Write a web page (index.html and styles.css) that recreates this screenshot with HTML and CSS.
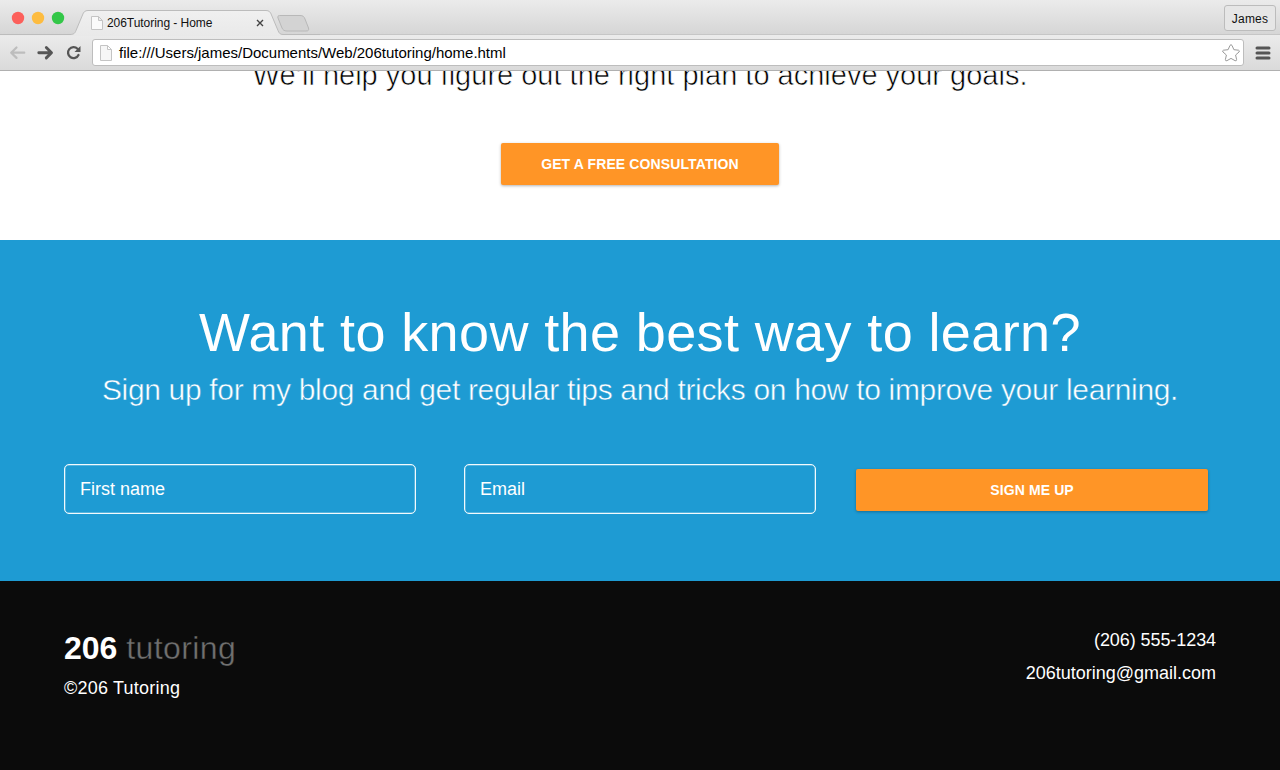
FILE: index.html
```html
<!DOCTYPE html>
<html lang="en">
<head>
<meta charset="utf-8">
<title>206Tutoring - Home</title>
<link rel="stylesheet" href="styles.css">
</head>
<body>
<div class="browser">
  <header class="chrome">
    <div class="titlebar">
      <svg class="strip" width="320" height="36" viewBox="0 0 320 36">
        <defs>
          <linearGradient id="tab" x1="0" y1="0" x2="0" y2="1"><stop offset="0" stop-color="#f0f0f0"/><stop offset="1" stop-color="#e9e9e9"/></linearGradient>
        </defs>
        <path d="M0 34.500H70C74 34.500 75 33 76 30.500L82.500 15C83.500 12 85 10.500 88 10.500H266C269 10.500 270.500 12 271.500 15L278 30.500C279 33 280 34.500 283 34.500H320V36H0Z" fill="url(#tab)"/>
        <path d="M0 34.500H70C74 34.500 75 33 76 30.500L82.500 15C83.500 12 85 10.500 88 10.500H266C269 10.500 270.500 12 271.500 15L278 30.500C279 33 280 34.500 283 34.500H320" fill="none" stroke="#bcbcbc"/>
        <path d="M279.500 15.500H300C303 15.500 304 16.500 305 19L308.500 28C309 30 308.500 31 306 31H287C284 31 283 30 282 28L278 18C277.500 16.500 278 15.500 279.500 15.500Z" fill="#d3d3d3" stroke="#b8b8b8"/>
        <circle cx="18" cy="18" r="6.200" fill="#fc605b"/>
        <circle cx="38" cy="18" r="6.200" fill="#fdbc40"/>
        <circle cx="58" cy="18" r="6.200" fill="#33c748"/>
        <path d="M91.500 16.500H98.500L102.500 20.500V29.500H91.500ZM98.500 16.500V20.500H102.500" fill="#fafafa" stroke="#c4c4c4"/>
        <path d="M257 20L263 26M263 20L257 26" stroke="#444" stroke-width="1.400"/>
      </svg>
      <span class="tab-title">206Tutoring - Home</span>
      <span class="profile">James</span>
    </div>
    <div class="toolbar">
      <svg class="nav" width="92" height="35" viewBox="0 36 92 35" fill="none" stroke-linecap="round" stroke-linejoin="round">
        <path d="M24.300 52.700H11.500M16.500 47.500L11.200 52.700L16.500 57.900" stroke="#bdbdbd" stroke-width="2.200"/>
        <path d="M38.800 52.700H51M46.300 47.500L51.500 52.700L46.300 57.900" stroke="#555" stroke-width="2.900"/>
        <path d="M77.500 48.800A5.500 5.500 0 1 0 78.500 55" stroke="#555" stroke-width="2.300"/>
        <path d="M80.500 46V52H74.500Z" fill="#555"/>
      </svg>
      <div class="address">
        <svg width="12" height="16" viewBox="0 0 12 16"><path d="M.5 .5H7.500L11.500 4.500V15.500H.5ZM7.500 .5V4.500H11.500" fill="#f6f6f6" stroke="#c4c4c4"/></svg>
        <span class="url">file:///Users/james/Documents/Web/206tutoring/home.html</span>
        <svg class="star" width="20" height="20" viewBox="0 0 20 20"><path d="M9 2.400Q10 .9 11 2.400L12.900 6.700L17.500 7.200Q19.100 7.700 18 9L14.600 12L15.600 16.600Q15.600 18.200 14.100 17.700L10 15.400L5.900 17.700Q4.400 18.200 4.400 16.600L5.400 12L2 9Q.9 7.700 2.500 7.200L7.100 6.700Z" fill="#fff" stroke="#999" stroke-linejoin="round"/></svg>
      </div>
      <svg class="menu" width="16" height="14" viewBox="0 0 16 14"><path d="M2 2H14M2 7H14M2 12H14" stroke="#555" stroke-width="3" stroke-linecap="round"/></svg>
    </div>
  </header>
  <main class="page">
    <section class="plan">
      <p class="plan-text">We’ll help you figure out the right plan to achieve your goals.</p>
      <a class="btn consult">GET A FREE CONSULTATION</a>
    </section>
    <section class="signup">
      <h1>Want to know the best way to learn?</h1>
      <p class="lead">Sign up for my blog and get regular tips and tricks on how to improve your learning.</p>
      <div class="form">
        <div class="field">First name</div>
        <div class="field">Email</div>
        <a class="btn join">SIGN ME UP</a>
      </div>
    </section>
    <footer class="footer">
      <div>
        <div class="logo"><b>206</b> <span>tutoring</span></div>
        <div class="copy">©206 Tutoring</div>
      </div>
      <div class="contact">
        <div class="phone">(206) 555-1234</div>
        <div>206tutoring@gmail.com</div>
      </div>
    </footer>
  </main>
</div>
</body>
</html>
```
FILE: styles.css
```css
* { box-sizing: border-box; margin: 0; padding: 0; }
body { font-family: "Liberation Sans", Arial, sans-serif; background: #fff; overflow: hidden; }
.browser { width: 1280px; height: 770px; display: flex; flex-direction: column; overflow: hidden; }
.chrome { height: 71px; flex: none; border-bottom: 1px solid #b0b0b0; }
.titlebar { height: 36px; display: flex; align-items: flex-start; background: linear-gradient(#ebebeb, #d6d6d6 34px, #c6c6c6 34px, #c6c6c6 35px, #ebebeb 35px); }
.strip { flex: none; margin-right: -213px; }
.tab-title { position: relative; margin-top: 16px; font-size: 12px; line-height: 14px; letter-spacing: -.05px; color: #111; white-space: nowrap; }
.profile { margin: 5px 4px 0 auto; width: 52px; height: 26px; border: 1px solid #bcbcbc; border-radius: 3px; background: #e6e6e6; font-size: 12px; letter-spacing: .2px; line-height: 26px; text-align: center; color: #111; }
.toolbar { height: 34px; display: flex; align-items: flex-start; background: linear-gradient(#ebebeb, #dadada); }
.nav { flex: none; }
.address { width: 1152px; height: 27px; margin-top: 3px; padding: 0 2px 0 7px; display: flex; align-items: center; border: 1px solid #bdbdbd; border-radius: 3px; background: #fff; }
.url { margin-left: 7px; font-size: 15px; line-height: 18px; letter-spacing: -.01px; color: #000; }
.star { margin-left: auto; }
.menu { margin: 10px 0 0 10.500px; }
.page { flex: 1; display: flex; flex-direction: column; }
.plan { height: 169px; display: flex; flex-direction: column; align-items: center; overflow: hidden; }
.plan-text { margin-top: -18px; height: 44px; line-height: 44px; font-size: 29px; color: #000; white-space: nowrap; -webkit-text-stroke: .6px #fff; }
.btn { display: flex; align-items: center; justify-content: center; height: 42px; border-radius: 2px; background: #ff9526; color: #fff; font-weight: bold; font-size: 14px; letter-spacing: .12px; box-shadow: 0 1px 3px rgba(0,0,0,.3); }
.consult { width: 278px; margin-top: 46px; }
.signup { height: 341px; flex: none; background: #1e9bd3; color: #fff; text-align: center; padding: 59px 64px 0; white-space: nowrap; }
.signup h1 { font-size: 54px; line-height: 66px; letter-spacing: .38px; font-weight: normal; }
.lead { margin-top: 1px; font-size: 30px; line-height: 48px; letter-spacing: -.33px; display: flex; justify-content: center; -webkit-text-stroke: .5px #1e9bd3; }
.form { display: flex; margin-top: 50px; text-align: left; }
.field { width: 352px; height: 50px; margin-right: 48px; border: 1px solid #f2fafd; border-radius: 5px; box-shadow: inset 0 0 0 .5px rgba(255,255,255,.5); padding: 0 15px; font-size: 18px; line-height: 48px; }
.join { width: 352px; margin: 5px 0 0 -8px; }
.footer { flex: 1; background: #0b0b0b; color: #fff; display: flex; justify-content: space-between; padding: 43px 64px 0; font-size: 18px; }
.logo { font-size: 32px; line-height: 48px; }
.logo span { color: #707070; letter-spacing: .4px; -webkit-text-stroke: .4px #0b0b0b; }
.copy { line-height: 32px; letter-spacing: .22px; }
.contact { text-align: right; line-height: 33px; }
.phone { letter-spacing: -.08px; }
```
